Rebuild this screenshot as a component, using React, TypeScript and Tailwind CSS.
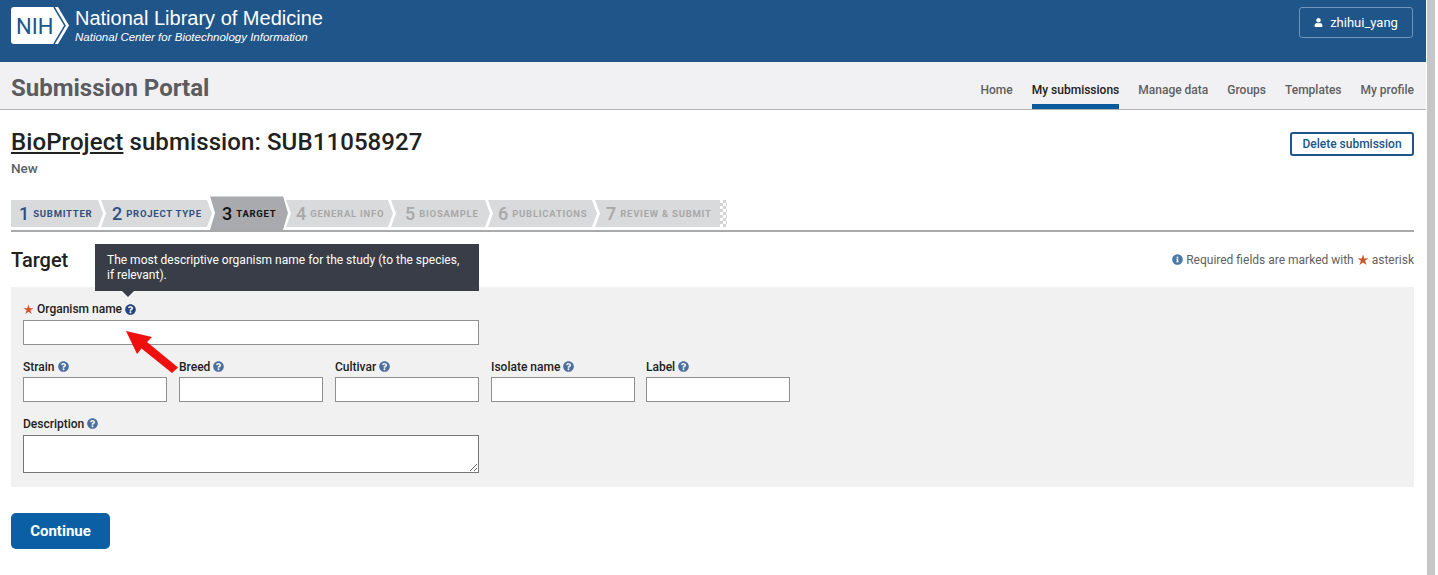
import { FaInfoCircle, FaQuestionCircle, FaUser } from "react-icons/fa";

const NAV = ["Home", "My submissions", "Manage data", "Groups", "Templates", "My profile"];

const STEPS = [
  { n: 1, label: "Submitter", w: "w-[92px] pl-[8px]", state: "done", first: true },
  { n: 2, label: "Project type", w: "w-[111px] pl-[11px]", state: "done" },
  { n: 3, label: "Target", w: "w-[78px] pl-[12px]", state: "active" },
  { n: 4, label: "General info", w: "w-[107px] pl-[10px]", state: "todo" },
  { n: 5, label: "Biosample", w: "w-[99px] pl-[14px]", state: "todo" },
  { n: 6, label: "Publications", w: "w-[109px] pl-[10px]", state: "todo" },
  { n: 7, label: "Review & submit", w: "w-[125px] pl-[11px]", state: "todo", last: true },
];

function Star({ className = "" }: { className?: string }) {
  return (
    <svg viewBox="0 0 24 24" className={`shrink-0 ${className}`}>
      <path d="M12 1l2.600 8 8.400-.4-6.800 5 2.800 8.400-7-5-7 5 2.800-8.400-6.800-5 8.400.4z" fill="#c9582c" />
    </svg>
  );
}

function Field({ label, width = "w-[144px]" }: { label: string; width?: string }) {
  return (
    <div className={`flex flex-col ${width}`}>
      <label className="flex h-[21px] items-center gap-[3px] text-[12px] font-medium text-[#212121]">
        {label}
        <FaQuestionCircle className="h-[11px] w-[11px] shrink-0 text-[#4a6f9f]" />
      </label>
      <input className="h-[25px] w-full border border-[#8f8f8f] bg-white" />
    </div>
  );
}

export default function App() {
  return (
    <div className="flex h-[575px] w-[1438px] overflow-hidden bg-white font-['Roboto',sans-serif]">
      <div className="relative w-[1426px] shrink-0">
        {/* Top bar */}
        <header className="flex h-[62px] items-start justify-between bg-[#20558a] pl-[11px] pr-[13px] pt-[7px]">
          <div className="flex items-start gap-[6px]">
            <svg viewBox="0 0 58 37" className="h-[37px] w-[58px]">
              <path d="M3 0h44l11 18.500-11 18.500H3a3 3 0 0 1-3-3V3a3 3 0 0 1 3-3z" fill="#fff" />
              <path d="M43 0l11 18.500L43 37" fill="none" stroke="#20558a" strokeWidth="1.500" />
              <text x="5" y="27" fontFamily="Roboto, sans-serif" fontSize="22" fill="#20558a">
                NIH
              </text>
            </svg>
            <div className="font-['Liberation_Sans',sans-serif] text-white">
              <div className="text-[20px] leading-[23px]">National Library of Medicine</div>
              <div className="text-[11.500px] italic leading-[14px]">National Center for Biotechnology Information</div>
            </div>
          </div>
          <button className="flex h-[31px] w-[114px] items-center justify-center gap-[7px] rounded-[3px] border border-[#6f95bd] text-[13px] text-white">
            <FaUser className="h-[9px] w-[9px]" />
            zhihui_yang
          </button>
        </header>

        {/* Portal nav */}
        <div className="flex h-[48px] items-stretch justify-between border-b border-[#b5b5b5] bg-[#f1f1f3] pl-[11px] pr-[12px]">
          <div className="mt-[4px] self-center text-[24px] font-bold text-[#5b5b60]">Submission Portal</div>
          <nav className="flex items-stretch gap-[19px]">
            {NAV.map((item) => (
              <a
                key={item}
                className={`flex items-center border-b-[5px] pt-[13px] text-[12px] font-medium ${
                  item === "My submissions" ? "border-[#0b5a99] text-[#212121]" : "border-transparent text-[#5f5f5f]"
                }`}
              >
                {item}
              </a>
            ))}
          </nav>
        </div>

        <main className="px-[12px]">
          {/* Title row */}
          <div className="flex items-start justify-between pt-[17px]">
            <div className="-ml-px">
              <h1 className="text-[24px] font-medium leading-[30px] tracking-[0.1px] text-[#212121]">
                <span className="underline">BioProject</span> submission: SUB11058927
              </h1>
              <div className="mt-[3px] text-[13.500px] font-medium leading-[16px] text-[#5f5f5f]">New</div>
            </div>
            <button className="mt-[5px] h-[24px] w-[124px] rounded-[3px] border-2 border-[#20558a] text-[12px] font-medium text-[#20558a]">
              Delete submission
            </button>
          </div>

          {/* Steps */}
          <div className="-ml-px mt-[24px] border-b-2 border-[#a9a9a9] pb-[3px]">
            <div className="flex h-[27px] items-center">
              {STEPS.map((s) => (
                <div
                  key={s.n}
                  className={`flex shrink-0 items-center gap-[4px] pt-[1px] ${s.w} ${
                    s.first
                      ? "[clip-path:polygon(0_0,calc(100%-5px)_0,100%_50%,calc(100%-5px)_100%,0_100%)]"
                      : s.last
                        ? "-ml-[2px] [clip-path:polygon(0_0,100%_0,100%_100%,0_100%,5px_50%)]"
                        : "-ml-[2px] [clip-path:polygon(0_0,calc(100%-5px)_0,100%_50%,calc(100%-5px)_100%,0_100%,5px_50%)]"
                  } ${
                    s.state === "active"
                      ? "relative -my-[3px] h-[34px] translate-y-[-0.500px] bg-[#a9aaae] text-[#111]"
                      : s.state === "done"
                        ? "h-[27px] bg-[#d9dadc] text-[#2f5080]"
                        : "h-[27px] bg-[#d9dadc] text-[#a8a8a8]"
                  }`}
                >
                  <span className="text-[18px] font-medium leading-none">{s.n}</span>
                  <span className="whitespace-nowrap text-[9.500px] font-bold uppercase tracking-[0.75px]">{s.label}</span>
                </div>
              ))}
              <div className="h-[27px] w-[7px] bg-[linear-gradient(45deg,#d4d4d4_25%,transparent_25%,transparent_75%,#d4d4d4_75%),linear-gradient(45deg,#d4d4d4_25%,transparent_25%,transparent_75%,#d4d4d4_75%)] bg-[length:6px_6px] bg-[position:0_0,3px_3px]" />
            </div>
          </div>

          {/* Section heading */}
          <div className="-ml-px flex h-[55px] items-center justify-between">
            <h2 className="text-[20px] font-medium text-[#212121]">Target</h2>
            <div className="flex items-center gap-[2px] text-[12px] text-[#5f5f5f]">
              <FaInfoCircle className="mr-[1px] h-[11px] w-[11px] text-[#4a7aa8]" />
              Required fields are marked with
              <Star className="ml-[1px] mr-[1px] h-[12px] w-[12px]" />
              asterisk
            </div>
          </div>

          {/* Form panel */}
          <section className="-ml-px h-[200px] bg-[#f1f1f1] px-[12px] pt-[12px]">
            <div className="flex w-[456px] flex-col">
              <label className="flex h-[20px] items-center gap-[3px] text-[12px] font-medium text-[#212121]">
                <Star className="h-[11px] w-[11px]" />
                Organism name
                <FaQuestionCircle className="h-[11px] w-[11px] shrink-0 text-[#25457c]" />
              </label>
              <input className="mt-[1px] h-[25px] w-full border border-[#8f8f8f] bg-white" />
            </div>
            <div className="mt-[11px] flex gap-[12px]">
              <Field label="Strain" />
              <Field label="Breed" />
              <Field label="Cultivar" />
              <Field label="Isolate name" />
              <Field label="Label" width="-ml-px w-[144px]" />
            </div>
            <div className="mt-[10px] flex w-[456px] flex-col">
              <label className="flex h-[23px] items-center gap-[3px] text-[12px] font-medium text-[#212121]">
                Description
                <FaQuestionCircle className="h-[11px] w-[11px] shrink-0 text-[#4a6f9f]" />
              </label>
              <textarea className="block h-[38px] w-full border border-[#767676] bg-white" />
            </div>
          </section>

          <button className="-ml-px mt-[26px] h-[36px] w-[99px] rounded-[5px] bg-[#0b5fa5] text-[15px] font-bold text-white">
            Continue
          </button>
        </main>

        {/* Tooltip */}
        <div className="absolute left-[95px] top-[244px] h-[47px] w-[384px] bg-[#383d47] px-[12px] pt-[9px] text-[12px] leading-[15px] text-white">
          The most descriptive organism name for the study (to the species, if relevant).
          <span className="absolute left-[27px] top-[47px] h-0 w-0 border-x-[6px] border-t-[6px] border-x-transparent border-t-[#383d47]" />
        </div>

        {/* Annotation arrow */}
        <svg viewBox="0 0 60 50" className="absolute left-[122px] top-[328px] h-[50px] w-[60px]">
          <path d="M4 3 L30 9 L25 14 L56 39.500 L50 45 L19.500 20.500 L15 26 Z" fill="#ee0f0f" />
        </svg>
      </div>

      {/* Window scrollbar */}
      <div className="ml-[1px] h-full w-[8px] bg-[#c6c6c6]" />
    </div>
  );
}
